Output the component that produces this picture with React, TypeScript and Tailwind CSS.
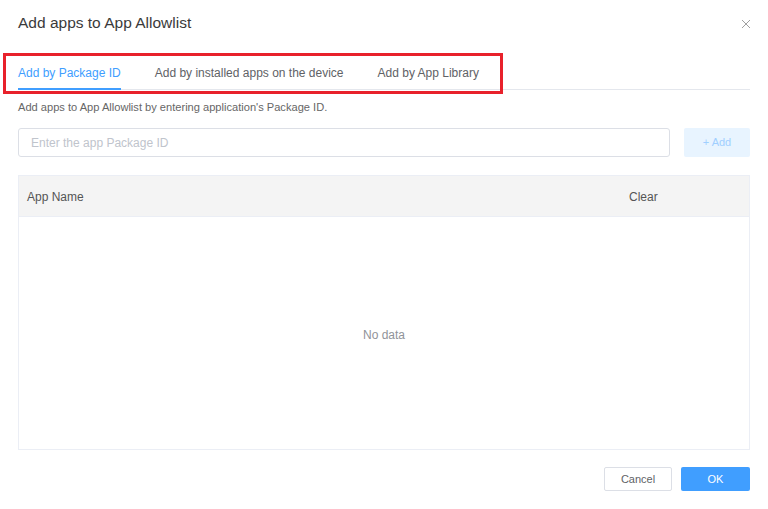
import React, { useState } from "react";

/* =========================================================
   DATA
========================================================= */

const TABS = [
  "Add by Package ID",
  "Add by installed apps on the device",
  "Add by App Library",
];

/* =========================================================
   COMPONENT
========================================================= */

export default function App() {
  const [activeTab, setActiveTab] = useState(0);
  const [packageId, setPackageId] = useState("");

  return (
    <div
      className="relative w-[768px] h-[509px] bg-white px-[18px] text-[#333]"
      style={{ fontFamily: '"Liberation Sans", Arial, sans-serif' }}
    >
      {/* HEADER */}
      <div className="flex items-center justify-between pt-[14px]">
        <h1 className="text-[15.5px] leading-[18px] text-[#3a3a3a]">
          Add apps to App Allowlist
        </h1>
        <button className="mr-[-1px] mt-[2px] text-[#a0a0a0]">
          <svg width="10" height="10" viewBox="0 0 10 10" fill="none">
            <path d="M1 1L9 9M9 1L1 9" stroke="currentColor" strokeWidth="1" />
          </svg>
        </button>
      </div>

      {/* TABS */}
      <div className="mt-[25px] flex gap-[34px] border-b border-[#e4e7ed]">
        {TABS.map((tab, i) => (
          <button
            key={tab}
            onClick={() => setActiveTab(i)}
            className={
              "relative h-[32px] text-[12px] leading-[32px] " +
              (i === activeTab ? "text-[#409eff]" : "text-[#606266]")
            }
          >
            {tab}
            {i === activeTab && (
              <span className="absolute bottom-[-1px] left-0 right-0 h-[2px] bg-[#409eff]" />
            )}
          </button>
        ))}
      </div>

      {/* DESCRIPTION */}
      <p className="mt-[10px] text-[11.1px] leading-[14px] text-[#666]">
        Add apps to App Allowlist by entering application's Package ID.
      </p>

      {/* INPUT ROW */}
      <div className="mt-[14px] flex gap-[14px]">
        <input
          value={packageId}
          onChange={(e) => setPackageId(e.target.value)}
          placeholder="Enter the app Package ID"
          className="h-[29px] flex-1 rounded-[3px] border border-[#dcdfe6] px-[12px] text-[12px] text-[#606266] outline-none placeholder:text-[#c0c4cc]"
        />
        <button className="h-[29px] w-[66px] rounded-[2px] bg-[#e8f4ff] text-[11px] text-[#a0cfff]">
          + Add
        </button>
      </div>

      {/* TABLE */}
      <div className="mt-[18px] border border-[#ebeef5]">
        <div className="grid h-[40px] grid-cols-[1fr_130px] items-center bg-[#f4f4f4] pt-[1px] text-[12px] text-[#555]">
          <div className="pl-[8px]">App Name</div>
          <div className="pl-[10px]">Clear</div>
        </div>
        <div className="flex h-[233px] items-center justify-center border-t border-[#ebeef5] pt-[3px] text-[12px] text-[#909399]">
          No data
        </div>
      </div>

      {/* FOOTER */}
      <div className="mt-[17px] flex justify-end gap-[9px]">
        <button className="h-[24px] w-[68px] rounded-[2px] border border-[#dcdfe6] bg-white text-[11px] text-[#606266]">
          Cancel
        </button>
        <button className="h-[24px] w-[69px] rounded-[2px] bg-[#409eff] text-[11px] text-white">
          OK
        </button>
      </div>

      {/* ANNOTATION OVERLAY */}
      <div className="pointer-events-none absolute left-[3px] top-[53px] h-[41px] w-[500px] border-[3px] border-[#e8212b]" />
    </div>
  );
}
